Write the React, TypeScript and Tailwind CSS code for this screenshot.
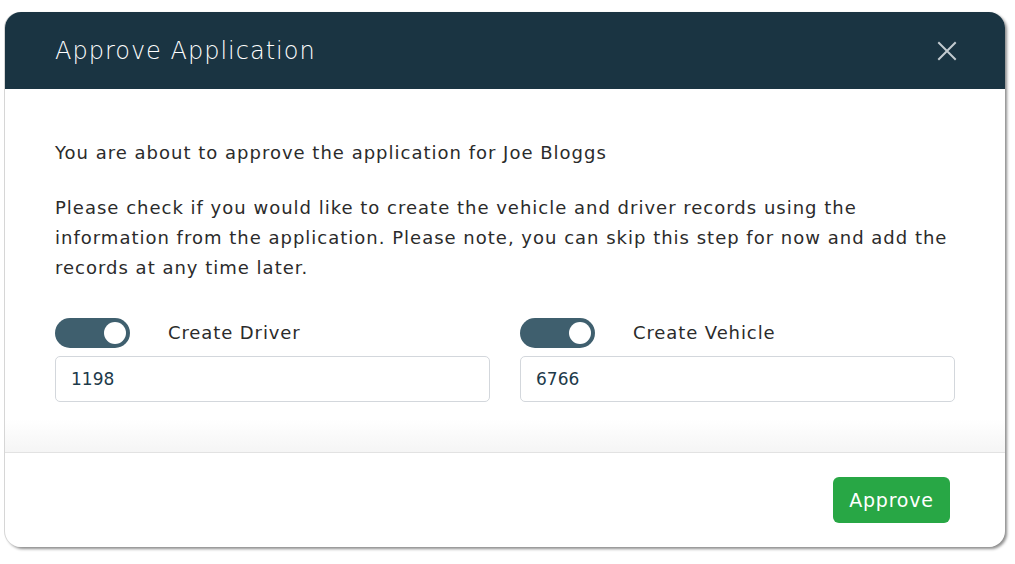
import React from "react";

function Toggle() {
  return (
    <div className="relative w-[75px] h-[30px] rounded-full bg-[#3f5f6e] shrink-0">
      <div className="absolute right-[4px] top-[4px] w-[22px] h-[22px] rounded-full bg-white" />
    </div>
  );
}

function Field({ label, value }: { label: string; value: string }) {
  return (
    <div className="flex flex-col gap-[8px]">
      <div className="flex items-center gap-[38px] h-[30px]">
        <Toggle />
        <span className="text-[18px] tracking-[0.9px] text-[#2b2b2b]">{label}</span>
      </div>
      <div className="h-[46px] rounded-[5px] border border-[#d3d7dc] flex items-center px-[15px] text-[17px] text-[#1d3a4a]">
        {value}
      </div>
    </div>
  );
}

export default function App() {
  return (
    <div
      className="w-[1015px] h-[564px] bg-white pt-[12px] pl-[5px]"
      style={{ fontFamily: '"DejaVu Sans", "Noto Sans", sans-serif' }}
    >
      <div className="w-[1000px] h-[535px] rounded-[16px] bg-white shadow-[-1px_0_0_#d6d6d6,2px_2px_3px_rgba(0,0,0,0.45)] overflow-hidden flex flex-col">
        <div className="h-[77px] bg-[#1a3442] flex items-center justify-between pl-[50px] pr-[48px] shrink-0">
          <h1 className="text-[24px] text-white font-light tracking-[1px]">Approve Application</h1>
          <svg width="20" height="20" viewBox="0 0 20 20" className="text-[#c3cbd0]">
            <path d="M2 2 L18 18 M18 2 L2 18" stroke="currentColor" strokeWidth="2" strokeLinecap="square" />
          </svg>
        </div>
        <div className="flex-1 flex flex-col bg-gradient-to-b from-white from-[91%] to-[#f5f5f5]">
          <div className="px-[50px] pt-[49px] text-[18px] leading-[30px] tracking-[1px] text-[#2b2b2b]">
            <p className="mb-[25px] whitespace-nowrap">You are about to approve the application for Joe Bloggs</p>
            <p className="flex flex-col whitespace-nowrap">
              <span>Please check if you would like to create the vehicle and driver records using the</span>
              <span>information from the application. Please note, you can skip this step for now and add the</span>
              <span>records at any time later.</span>
            </p>
            <div className="grid grid-cols-2 gap-[30px] mt-[35px] tracking-normal">
              <Field label="Create Driver" value="1198" />
              <Field label="Create Vehicle" value="6766" />
            </div>
          </div>
        </div>
        <div className="h-[95px] border-t border-[#e2e2e2] flex items-center justify-end pr-[55px] shrink-0">
          <button className="w-[117px] h-[46px] rounded-[6px] bg-[#28a745] text-white text-[19px] tracking-[0.8px]">
            Approve
          </button>
        </div>
      </div>
    </div>
  );
}
